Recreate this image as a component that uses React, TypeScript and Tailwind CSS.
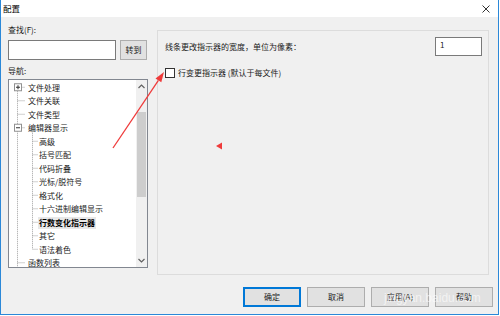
import React from 'react';

type Row = { t: string; lvl: 0 | 1; exp?: 'plus' | 'minus'; sel?: boolean };

const rows: Row[] = [
  { t: '文件处理', lvl: 0, exp: 'plus' },
  { t: '文件关联', lvl: 0 },
  { t: '文件类型', lvl: 0 },
  { t: '编辑器显示', lvl: 0, exp: 'minus' },
  { t: '高级', lvl: 1 },
  { t: '括号匹配', lvl: 1 },
  { t: '代码折叠', lvl: 1 },
  { t: '光标/脱符号', lvl: 1 },
  { t: '格式化', lvl: 1 },
  { t: '十六进制编辑显示', lvl: 1 },
  { t: '行数变化指示器', lvl: 1, sel: true },
  { t: '其它', lvl: 1 },
  { t: '语法着色', lvl: 1 },
  { t: '函数列表', lvl: 0 },
];

const ROW_H = 13.5;
const cy = (i: number) => ROW_H * i + ROW_H / 2;

function TreeLines() {
  const last = rows.length - 1;
  return (
    <svg className="absolute left-0 top-0 pointer-events-none" width="130" height="200">
      <g stroke="#a0a0a0" strokeWidth="1" strokeDasharray="1 1" fill="none">
        <line x1="8.5" y1={cy(0)} x2="8.5" y2={cy(last) + 20} />
        {rows.map((r, i) =>
          r.lvl === 0 ? <line key={'h' + i} x1="8.5" y1={cy(i) + 0.5} x2="16" y2={cy(i) + 0.5} /> : null
        )}
        <line x1="23.5" y1={cy(3) + 4} x2="23.5" y2={cy(12)} />
        {rows.map((r, i) =>
          r.lvl === 1 ? <line key={'c' + i} x1="23.5" y1={cy(i) + 0.5} x2="29" y2={cy(i) + 0.5} /> : null
        )}
      </g>
      {rows.map((r, i) =>
        r.exp ? (
          <g key={'e' + i}>
            <rect x="5.5" y={cy(i) - 3} width="7" height="7" fill="#fff" stroke="#919191" />
            <line x1="7" y1={cy(i) + 0.5} x2="11" y2={cy(i) + 0.5} stroke="#333" />
            {r.exp === 'plus' && <line x1="9" y1={cy(i) - 1.5} x2="9" y2={cy(i) + 2.5} stroke="#333" />}
          </g>
        ) : null
      )}
    </svg>
  );
}

function Chevron({ up }: { up?: boolean }) {
  return (
    <svg width="7" height="5" viewBox="0 0 7 5">
      <path
        d={up ? 'M0.5 4 L3.5 1 L6.5 4' : 'M0.5 1 L3.5 4 L6.5 1'}
        stroke="#606060"
        strokeWidth="1.2"
        fill="none"
      />
    </svg>
  );
}

function Btn({ label, primary }: { label: string; primary?: boolean }) {
  return (
    <button
      className={
        primary
          ? 'w-[58px] h-[20px] bg-[#e1e1e1] border border-[#0078d7] shadow-[inset_0_0_0_1px_#0078d7] text-[8px] text-[#1a1a1a]'
          : 'w-[58px] h-[20px] bg-[#e1e1e1] border border-[#adadad] text-[8px] text-[#1a1a1a]'
      }
    >
      {label}
    </button>
  );
}

export default function App() {
  return (
    <div
      className="relative w-[500px] h-[316px] bg-white overflow-hidden"
      style={{ fontFamily: '"Noto Sans CJK SC", "Noto Sans", sans-serif' }}
    >
      <div className="flex flex-col w-[499px] h-[315px] border-l border-r border-b border-[#2b88d8]">
        {/* Title bar */}
        <div className="flex items-center justify-between h-[17px] bg-white pl-[2px] pr-[8px]">
          <span className="text-[8.5px] text-black leading-none">配置</span>
          <svg width="8" height="8" viewBox="0 0 8 8">
            <path d="M0.5 0.5 L7.5 7.5 M7.5 0.5 L0.5 7.5" stroke="#333" strokeWidth="1" />
          </svg>
        </div>

        {/* Body */}
        <div className="flex-1 flex flex-col bg-[#f0f0f0] text-[8px] text-[#1a1a1a]">
          <div className="flex pt-[7px] pl-[7px] gap-[9px]">
            {/* Left column */}
            <div className="flex flex-col w-[140px]">
              <div className="h-[12px] leading-[12px]">查找(F):</div>
              <div className="flex mt-[4px] gap-[4px]">
                <div className="w-[108px] h-[20px] bg-white border border-[#7a7a7a]" />
                <button className="w-[27px] h-[20px] bg-[#e1e1e1] border border-[#adadad] text-[8px]">转到</button>
              </div>
              <div className="h-[14px] leading-[14px] mt-[4px]">导航:</div>
              <div className="flex h-[189px] mt-[1px] bg-white border border-[#828790] overflow-hidden">
                <div className="relative flex-1 pt-[1px] overflow-hidden">
                  <TreeLines />
                  {rows.map((r) => (
                    <div
                      key={r.t}
                      className={r.lvl === 0 ? 'flex items-center h-[13.5px] pl-[18px]' : 'flex items-center h-[13.5px] pl-[29px]'}
                    >
                      <span
                        className={
                          r.sel
                            ? 'px-[1px] leading-[12px] bg-[#e8e8e8] font-bold text-black'
                            : 'px-[1px] leading-[12px] whitespace-nowrap'
                        }
                      >
                        {r.t}
                      </span>
                    </div>
                  ))}
                </div>
                {/* Scrollbar */}
                <div className="flex flex-col items-center w-[11px] bg-[#f0f0f0]">
                  <div className="h-[13px] flex items-center">
                    <Chevron up />
                  </div>
                  <div className="flex-1 w-full px-[1px] pt-[19px]">
                    <div className="h-[85px] bg-[#cdcdcd]" />
                  </div>
                  <div className="h-[13px] flex items-center">
                    <Chevron />
                  </div>
                </div>
              </div>
            </div>

            {/* Right group */}
            <div className="mt-[6px] w-[332px] h-[245px] border border-[#dcdcdc] pl-[7px] pr-[6px] pt-[6px]">
              <div className="flex items-center justify-between">
                <span>线条更改指示器的宽度，单位为像素：</span>
                <div className="w-[47px] h-[19px] bg-white border border-[#7a7a7a] pl-[4px] pt-[1px] leading-[12px]">1</div>
              </div>
              <div className="flex items-center mt-[11px] h-[12px] gap-[3px]">
                <div className="w-[10px] h-[10px] bg-white border border-[#333]" />
                <span>行变更指示器 (默认于每文件)</span>
              </div>
            </div>
          </div>

          <div className="flex justify-end gap-[6px] mt-[12px] pr-[5px]">
            <Btn label="确定" primary />
            <Btn label="取消" />
            <Btn label="应用(A)" />
            <Btn label="帮助" />
          </div>
        </div>
      </div>

      {/* Annotation overlay */}
      <svg className="absolute left-0 top-0 pointer-events-none" width="500" height="316">
        <line x1="113" y1="148" x2="158.4" y2="80.3" stroke="#ef3b3b" strokeWidth="1.3" />
        <polygon points="164,72 161.3,82.2 155.5,78.4" fill="#ef3b3b" />
        <polygon points="216,146 222,142.5 222,149.5" fill="#ef3b3b" />
      </svg>

      {/* Watermark */}
      <div className="absolute left-[384px] top-[289px] text-[12px] text-white/60 pointer-events-none" style={{ fontFamily: '"Liberation Sans", sans-serif' }}>
        jingyan.baidu.com
      </div>
    </div>
  );
}
